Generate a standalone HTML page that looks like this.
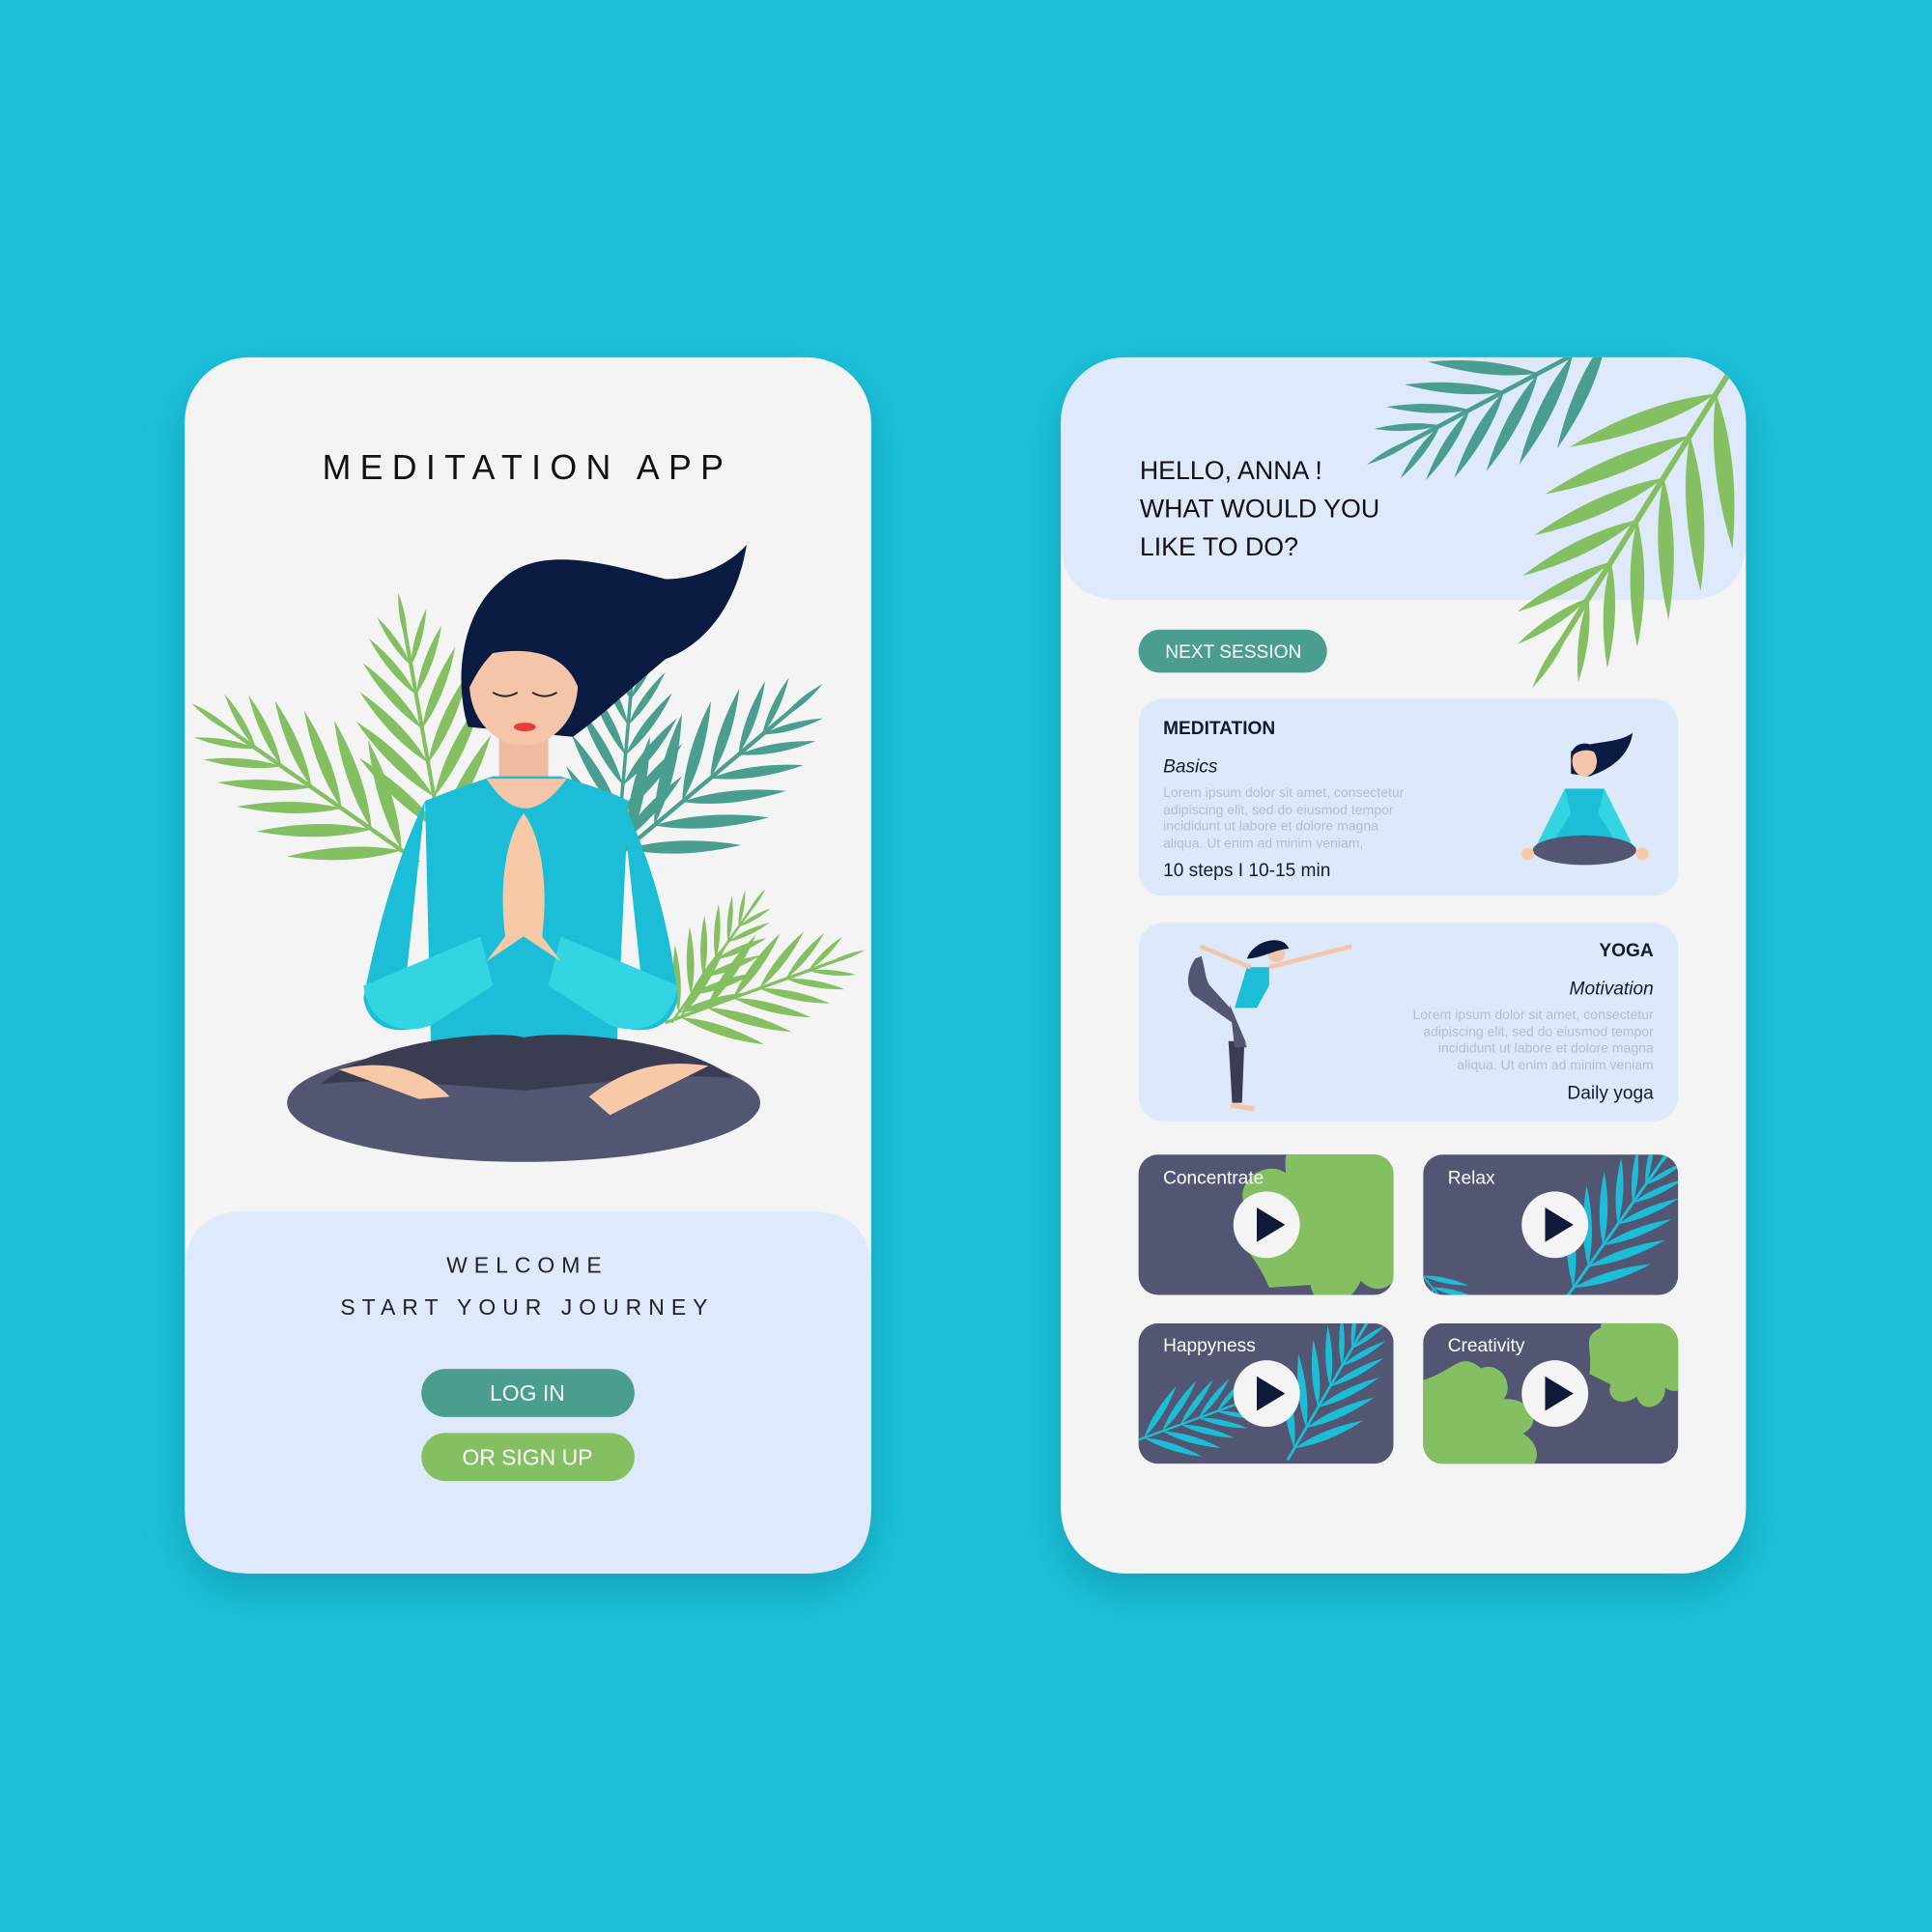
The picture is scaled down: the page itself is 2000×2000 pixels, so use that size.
<!DOCTYPE html>
<html><head><meta charset="utf-8"><style>
html,body{margin:0;padding:0;background:#1bbfd8;}
svg{display:block}
text{font-family:"Liberation Sans",sans-serif}
</style></head><body>
<svg width="2000" height="2000" viewBox="0 0 1568 1568" xmlns="http://www.w3.org/2000/svg">
<defs>
<path id="lf" d="M0 0 Q45 -11 100 0 Q45 11 0 0Z"/>
<g id="frond">
<rect x="0" y="-2" width="230" height="4"/>
<use href="#lf" transform="translate(20,0) rotate(-38) scale(1.1)"/>
<use href="#lf" transform="translate(20,0) rotate(38) scale(1.1)"/>
<use href="#lf" transform="translate(55,0) rotate(-36) scale(1.1)"/>
<use href="#lf" transform="translate(55,0) rotate(36) scale(1.1)"/>
<use href="#lf" transform="translate(90,0) rotate(-34) scale(1)"/>
<use href="#lf" transform="translate(90,0) rotate(34) scale(1)"/>
<use href="#lf" transform="translate(125,0) rotate(-32) scale(.9)"/>
<use href="#lf" transform="translate(125,0) rotate(32) scale(.9)"/>
<use href="#lf" transform="translate(160,0) rotate(-30) scale(.75)"/>
<use href="#lf" transform="translate(160,0) rotate(30) scale(.75)"/>
<use href="#lf" transform="translate(190,0) rotate(-25) scale(.6)"/>
<use href="#lf" transform="translate(190,0) rotate(25) scale(.6)"/>
<use href="#lf" transform="translate(215,0) scale(.5)"/>
</g>
<path id="oak" d="M0 0 C20 -30 10 -50 40 -50 C50 -70 80 -60 80 -40 C100 -60 130 -50 120 -25 C150 -30 160 0 140 10 C170 20 150 50 125 45 C130 75 95 80 85 60 C75 85 40 80 45 55 C20 60 5 40 20 25 Z"/>
<filter id="sh" x="-20%" y="-20%" width="140%" height="140%"><feDropShadow dx="0" dy="14" stdDeviation="16" flood-color="#0a6e80" flood-opacity="0.35"/></filter>
<clipPath id="cR"><rect x="861" y="290" width="556" height="987" rx="52"/></clipPath>
<clipPath id="t1"><rect x="924" y="937" width="207" height="114" rx="16"/></clipPath>
<clipPath id="t2"><rect x="1155" y="937" width="207" height="114" rx="16"/></clipPath>
<clipPath id="t3"><rect x="924" y="1074" width="207" height="114" rx="16"/></clipPath>
<clipPath id="t4"><rect x="1155" y="1074" width="207" height="114" rx="16"/></clipPath>
</defs>
<rect width="1568" height="1568" fill="#1bbfd8"/>

<!-- LEFT CARD -->
<rect x="150" y="290" width="557" height="987" rx="52" fill="#f4f4f4" filter="url(#sh)"/>
<path d="M150 1033 Q150 983 200 983 L657 983 Q707 983 707 1033 L707 1225 Q707 1277 655 1277 L202 1277 Q150 1277 150 1225Z" fill="#dee9fb"/>
<text x="428" y="389" text-anchor="middle" font-size="28" letter-spacing="7.3" fill="#111">MEDITATION APP</text>

<use href="#frond" fill="#84c062" transform="translate(340,700) rotate(-145) scale(0.85)"/>
<use href="#frond" fill="#84c062" transform="translate(360,690) rotate(-100) scale(0.8)"/>
<use href="#frond" fill="#4a9e8f" transform="translate(495,700) rotate(-40) scale(0.85)"/>
<use href="#frond" fill="#4a9e8f" transform="translate(500,700) rotate(-85) scale(0.7)"/>
<use href="#frond" fill="#84c062" transform="translate(540,830) rotate(-20) scale(0.65)"/>
<use href="#frond" fill="#84c062" transform="translate(545,830) rotate(-55) scale(0.5)"/>

<path d="M408 470 C440 440 500 460 540 470 C570 470 595 455 606 442 C600 480 580 520 540 535 C510 560 490 580 465 598 L380 590 C370 560 370 500 408 470Z" fill="#0b1a40"/>
<rect x="405" y="580" width="40" height="60" fill="#eebba0"/>
<ellipse cx="425" cy="555" rx="44" ry="50" fill="#f4c5a8"/>
<path d="M380 560 C375 510 400 500 430 505 C460 505 475 530 470 560 C460 530 430 525 400 530 C390 540 385 550 380 560Z" fill="#0b1a40"/>
<path d="M400 562 q10 6 20 0 M432 562 q10 6 20 0" stroke="#222" stroke-width="1.5" fill="none"/>
<ellipse cx="426" cy="590" rx="9" ry="3.5" fill="#e63c3c"/>
<path d="M345 650 C370 640 385 635 400 630 L455 630 C470 635 490 640 510 650 L500 860 L350 860Z" fill="#1bbed6"/>
<path d="M395 632 Q425 680 460 632Z" fill="#f4c5a8"/>
<ellipse cx="425" cy="895" rx="192" ry="48" fill="#525672"/>
<path d="M260 880 C300 845 400 835 425 842 C460 835 560 845 595 875 C540 870 480 880 425 885 C360 880 300 875 260 880Z" fill="#3a3d52"/>
<path d="M275 868 C310 860 340 865 365 890 L340 892 Z" fill="#f8c9a6"/>
<path d="M575 865 C540 860 510 865 478 890 L495 905 Z" fill="#f8c9a6"/>
<path d="M345 650 C320 700 305 760 295 810 C300 840 330 840 350 830 L400 800 L395 760 L330 790Z" fill="#1bbed6"/>
<path d="M505 650 C530 700 545 760 550 810 C545 840 515 840 495 830 L450 800 L455 760 L520 790Z" fill="#1bbed6"/>
<path d="M295 800 C300 835 330 840 350 832 L400 800 L390 760 Z" fill="#33d5e2"/>
<path d="M550 800 C545 835 515 840 495 832 L445 800 L455 760 Z" fill="#33d5e2"/>
<path d="M425 660 C410 680 405 720 410 760 L395 780 L425 760 L455 780 L440 760 C445 720 440 680 425 660Z" fill="#f8c9a6"/>

<text x="428" y="1033" text-anchor="middle" font-size="18" letter-spacing="5.5" fill="#222">WELCOME</text>
<text x="428" y="1067" text-anchor="middle" font-size="18" letter-spacing="5.5" fill="#222">START YOUR JOURNEY</text>
<rect x="342" y="1111" width="173" height="39" rx="19.5" fill="#4a9e8f"/>
<text x="428" y="1137" text-anchor="middle" font-size="18" fill="#fff">LOG IN</text>
<rect x="342" y="1163" width="173" height="39" rx="19.5" fill="#84c062"/>
<text x="428" y="1189" text-anchor="middle" font-size="18" fill="#fff">OR SIGN UP</text>

<!-- RIGHT CARD -->
<rect x="861" y="290" width="556" height="987" rx="52" fill="#f4f4f4" filter="url(#sh)"/>
<g clip-path="url(#cR)">
<path d="M861 290 L1417 290 L1417 437 Q1417 487 1367 487 L911 487 Q861 487 861 437Z" fill="#dee9fb"/>
<use href="#frond" fill="#4a9e8f" transform="translate(1320,265) rotate(152) scale(0.9)"/>
<use href="#frond" fill="#84c062" transform="translate(1405,300) rotate(122) scale(1.15)"/>
</g>
<text font-size="21" fill="#111"><tspan x="925" y="389">HELLO, ANNA !</tspan><tspan x="925" y="420">WHAT WOULD YOU</tspan><tspan x="925" y="451">LIKE TO DO?</tspan></text>
<rect x="924" y="511" width="153" height="35" rx="17.5" fill="#4a9e8f"/>
<text x="1001" y="534" text-anchor="middle" font-size="15" fill="#fff">NEXT SESSION</text>

<rect x="924" y="567" width="438" height="160" rx="20" fill="#dde9fb"/>
<text x="944" y="596" font-size="15" font-weight="bold" fill="#111a33">MEDITATION</text>
<text x="944" y="627" font-size="15" font-style="italic" fill="#111a33">Basics</text>
<g font-size="11" fill="#b3bccb"><text x="944" y="647">Lorem ipsum dolor sit amet, consectetur</text><text x="944" y="661">adipiscing elit, sed do eiusmod tempor</text><text x="944" y="674">incididunt ut labore et dolore magna</text><text x="944" y="688">aliqua. Ut enim ad minim veniam,</text></g>
<text x="944" y="711" font-size="15" fill="#111a33">10 steps  I  10-15 min</text>
<path d="M1275 610 C1290 600 1310 605 1325 595 C1322 615 1305 625 1290 630 L1275 628Z" fill="#0b1a40"/>
<ellipse cx="1286" cy="618" rx="10" ry="12" fill="#f4c5a8"/>
<path d="M1275 615 C1275 600 1295 600 1297 612 C1290 607 1280 608 1275 615Z" fill="#0b1a40"/>
<path d="M1270 640 L1302 640 L1310 680 L1262 680Z" fill="#1bbed6"/>
<path d="M1270 640 L1245 690 L1255 692 L1275 660Z M1302 640 L1327 690 L1317 692 L1297 660Z" fill="#33d5e2"/>
<ellipse cx="1286" cy="690" rx="42" ry="12" fill="#525672"/>
<circle cx="1240" cy="693" r="5" fill="#f8c9a6"/><circle cx="1333" cy="693" r="5" fill="#f8c9a6"/>

<rect x="924" y="749" width="438" height="161" rx="20" fill="#dde9fb"/>
<text x="1342" y="776" text-anchor="end" font-size="15" font-weight="bold" fill="#111a33">YOGA</text>
<text x="1342" y="807" text-anchor="end" font-size="15" font-style="italic" fill="#111a33">Motivation</text>
<g font-size="11" fill="#b3bccb" text-anchor="end"><text x="1342" y="827">Lorem ipsum dolor sit amet, consectetur</text><text x="1342" y="841">adipiscing elit, sed do eiusmod tempor</text><text x="1342" y="854">incididunt ut labore et dolore magna</text><text x="1342" y="868">aliqua. Ut enim ad minim veniam</text></g>
<text x="1342" y="892" text-anchor="end" font-size="15" fill="#111a33">Daily yoga</text>
<!-- yoga figure -->
<path d="M997 845 L1010 845 L1008 895 L1000 895 Z" fill="#3a3d52"/>
<path d="M970 778 C962 790 962 805 972 810 L1000 830 L1012 848 L1000 820 L982 800 C978 795 978 785 975 776Z" fill="#525672"/>
<path d="M998 815 L1012 850 L1002 850 Z" fill="#525672"/>
<path d="M1012 785 L1030 785 L1030 800 L1020 818 L1002 818Z" fill="#1bbed6"/>
<path d="M974 768 L1015 785 M1030 785 L1097 768" stroke="#f4c5a8" stroke-width="3.5" fill="none"/>
<circle cx="1036" cy="774" r="7" fill="#f4c5a8"/>
<path d="M1012 778 C1018 762 1042 758 1046 770 C1036 770 1024 778 1012 778Z" fill="#0b1a40"/>
<path d="M999 897 L1018 900" stroke="#f4c5a8" stroke-width="4"/>

<g clip-path="url(#t1)"><rect x="924" y="937" width="207" height="114" fill="#525672"/>
<use href="#oak" fill="#84c062" transform="translate(1030,1045) rotate(-55) scale(1.05)"/></g>
<g clip-path="url(#t2)"><rect x="1155" y="937" width="207" height="114" fill="#525672"/>
<use href="#frond" fill="#1bbed6" transform="translate(1270,1055) rotate(-55) scale(0.6)"/>
<use href="#frond" fill="#1bbed6" transform="translate(1150,1030) rotate(50) scale(0.35)"/></g>
<g clip-path="url(#t3)"><rect x="924" y="1074" width="207" height="114" fill="#525672"/>
<use href="#frond" fill="#1bbed6" transform="translate(1045,1185) rotate(-60) scale(0.55)"/>
<use href="#frond" fill="#1bbed6" transform="translate(920,1170) rotate(-20) scale(0.45)"/></g>
<g clip-path="url(#t4)"><rect x="1155" y="1074" width="207" height="114" fill="#525672"/>
<use href="#oak" fill="#84c062" transform="translate(1155,1120) rotate(40) scale(0.75)"/>
<use href="#oak" fill="#84c062" transform="translate(1290,1115) rotate(-25) scale(0.6)"/></g>
<g font-size="15" fill="#fff"><text x="944" y="961">Concentrate</text><text x="1175" y="961">Relax</text><text x="944" y="1097">Happyness</text><text x="1175" y="1097">Creativity</text></g>
<g fill="#f4f4f4"><circle cx="1028" cy="994" r="27"/><circle cx="1262" cy="994" r="27"/><circle cx="1028" cy="1131" r="27"/><circle cx="1262" cy="1131" r="27"/></g>
<g fill="#0e1a38"><path d="M1020 980 L1043 994 L1020 1008Z"/><path d="M1254 980 L1277 994 L1254 1008Z"/><path d="M1020 1117 L1043 1131 L1020 1145Z"/><path d="M1254 1117 L1277 1131 L1254 1145Z"/></g>
</svg>
</body></html>
